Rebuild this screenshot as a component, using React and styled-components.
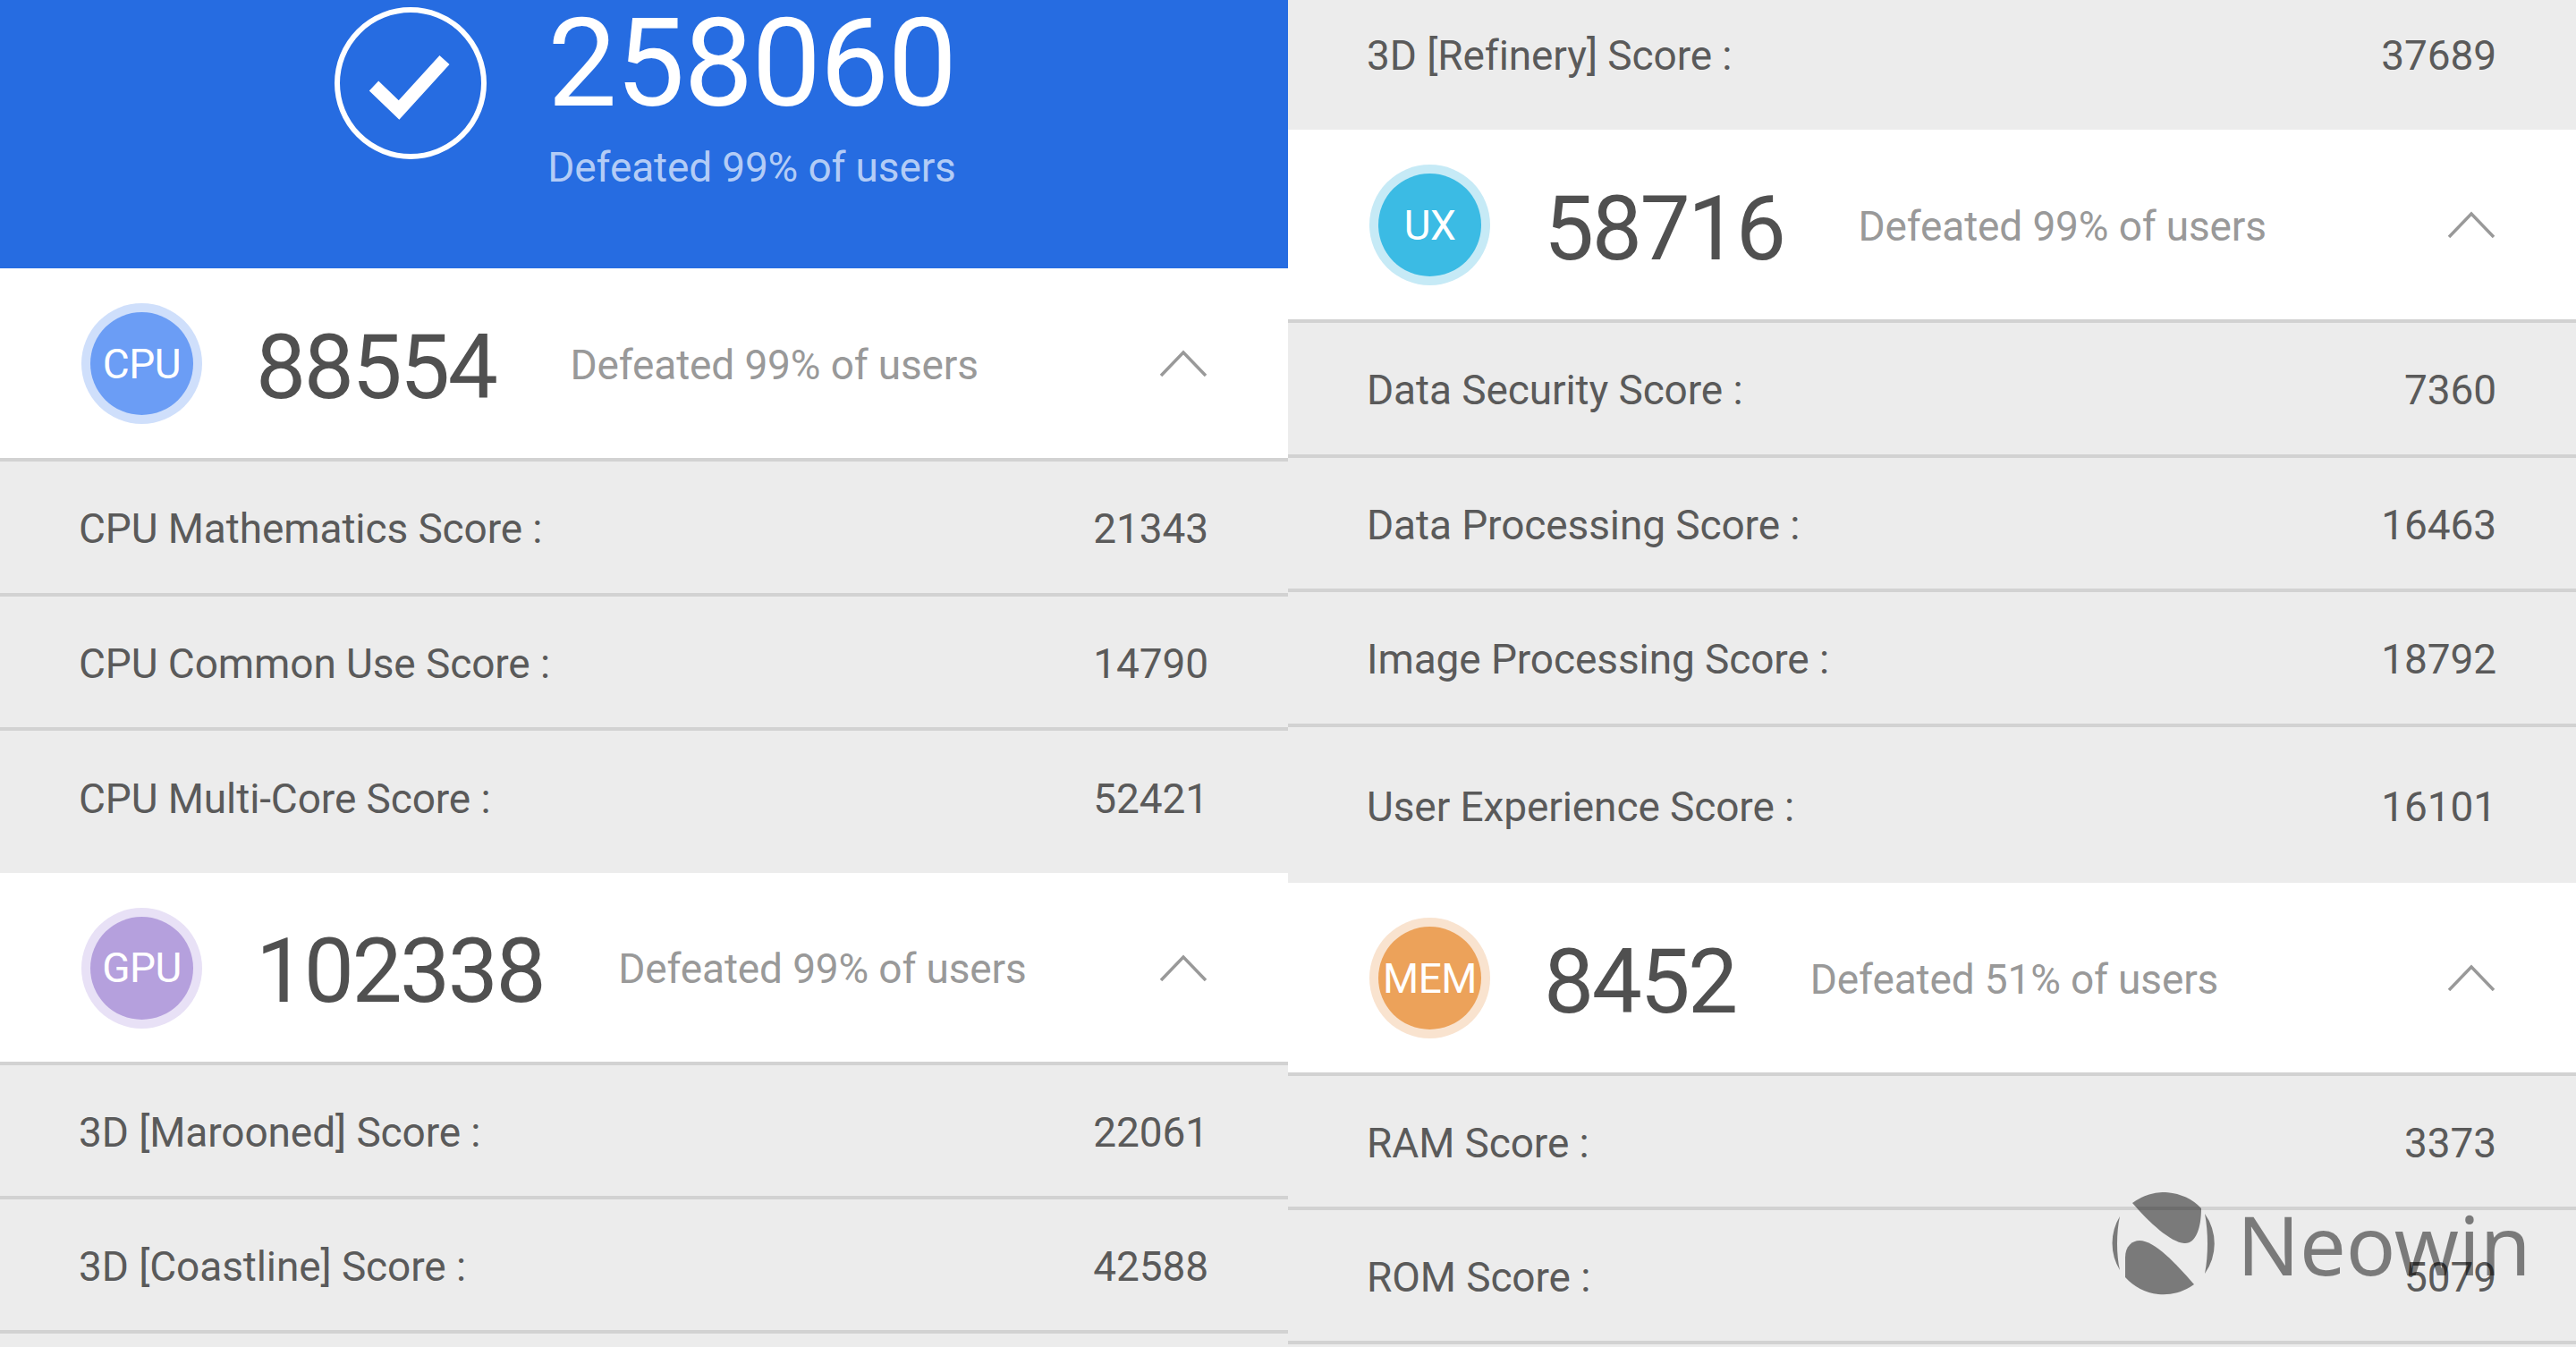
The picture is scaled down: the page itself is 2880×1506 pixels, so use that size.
import React from "react"
import styled, { createGlobalStyle } from "styled-components"

const GlobalStyle = createGlobalStyle`
  html, body {
    margin: 0;
    padding: 0;
    background: #ececec;
  }
`

const sections = {
  left: [
    { type: "hero" },
    {
      type: "head", label: "CPU", score: "88554", beat: "99", color: "#6b9df5", ring: "#cfdffb", height: 216,
      rows: [
        ["CPU Mathematics Score :", "21343", 151],
        ["CPU Common Use Score :", "14790", 150],
        ["CPU Multi-Core Score :", "52421", 159, 11, true],
      ],
    },
    {
      type: "head", label: "GPU", score: "102338", beat: "99", color: "#b5a0dd", ring: "#e8e1f6", height: 215,
      rows: [
        ["3D [Marooned] Score :", "22061", 150],
        ["3D [Coastline] Score :", "42588", 150],
        ["", "", 60],
      ],
    },
  ],
  right: [
    { type: "rows", rows: [["3D [Refinery] Score :", "37689", 145, 24, true]] },
    {
      type: "head", label: "UX", score: "58716", beat: "99", color: "#3bbbe4", ring: "#c6eaf6", height: 216,
      rows: [
        ["Data Security Score :", "7360", 151],
        ["Data Processing Score :", "16463", 150],
        ["Image Processing Score :", "18792", 151],
        ["User Experience Score :", "16101", 174, 0, true],
      ],
    },
    {
      type: "head", label: "MEM", score: "8452", beat: "51", color: "#eca25a", ring: "#f9e3cf", height: 216,
      rows: [
        ["RAM Score :", "3373", 150],
        ["ROM Score :", "5079", 150],
      ],
    },
  ],
}

function Hero() {
  return (
    <HeroBar>
      <CheckIcon viewBox="0 0 170 170">
        <circle cx="85" cy="85" r="82" fill="none" stroke="#fff" strokeWidth="6" />
        <polyline points="44,88 72,115 123,59" fill="none" stroke="#fff" strokeWidth="15" />
      </CheckIcon>
      <HeroText>
        <HeroScore>258060</HeroScore>
        <HeroBeat>Defeated 99% of users</HeroBeat>
      </HeroText>
    </HeroBar>
  )
}

function Section({ section }) {
  return (
    <>
      <Head $height={section.height}>
        <Badge $color={section.color} $ring={section.ring}>{section.label}</Badge>
        <Score>{section.score}</Score>
        <Beat>Defeated {section.beat}% of users</Beat>
        <Chevron viewBox="0 0 54 30">
          <polyline points="2,29 27,3 52,29" fill="none" stroke="#999" strokeWidth="3.5" />
        </Chevron>
      </Head>
      <Rows rows={section.rows} />
    </>
  )
}

function Rows({ rows }) {
  return rows.map(([name, value, height, lift, flat]) => (
    <Row key={name || "blank"} $height={height} $lift={lift} $flat={flat}>
      <span>{name}</span>
      <span>{value}</span>
    </Row>
  ))
}

function Column({ items }) {
  return (
    <Col>
      {items.map((item, i) => {
        if (item.type === "hero") return <Hero key={i} />
        if (item.type === "rows") return <Rows key={i} rows={item.rows} />
        return <Section key={i} section={item} />
      })}
    </Col>
  )
}

export default function App() {
  return (
    <Page>
      <GlobalStyle />
      <Column items={sections.left} />
      <Column items={sections.right} />
      <Watermark>
        <LogoMark viewBox="0 0 116 115">
          <path d="M23 12 A57.5 57.5 0 0 1 100 18 C100 40 94 58 81 57 C66 56 42 34 23 12 Z" />
          <path d="M15 95 L15 73 C15 60 23 54 31 54 C48 54 72 80 92 103 A57.5 57.5 0 0 1 15 95 Z" />
          <path d="M9 27 A57.5 57.5 0 0 0 9 87 C5 70 5 45 9 27 Z" />
          <path d="M104 24 A57.5 57.5 0 0 1 104 91 C108 70 108 45 104 24 Z" />
        </LogoMark>
        <LogoText>Neowin</LogoText>
      </Watermark>
    </Page>
  )
}

const Page = styled.div`
  position: relative;
  display: grid;
  grid-template-columns: 1440px 1440px;
  width: 2880px;
  height: 1506px;
  overflow: hidden;
  font-family: Roboto, "Liberation Sans", sans-serif;
  background: #ececec;
`

const Col = styled.div`
  display: flex;
  flex-direction: column;
  min-width: 0;
`

const HeroBar = styled.div`
  display: flex;
  flex: none;
  justify-content: center;
  gap: 68px;
  height: 300px;
  padding: 8px 0 0 3px;
  box-sizing: border-box;
  background: #266ce1;
`

const CheckIcon = styled.svg`
  flex: none;
  width: 170px;
  height: 170px;
`

const HeroText = styled.div`
  display: flex;
  flex-direction: column;
  align-items: center;
`

const HeroScore = styled.div`
  margin-top: -6px;
  font-size: 138px;
  line-height: 138px;
  letter-spacing: -1.5px;
  color: #fff;
`

const HeroBeat = styled.div`
  margin-top: 20px;
  font-size: 46px;
  line-height: 54px;
  letter-spacing: -0.15px;
  color: #b3ccf6;
`

const Head = styled.div`
  display: flex;
  flex: none;
  align-items: center;
  height: ${props => props.$height}px;
  padding: 0 90px 0 101px;
  box-sizing: border-box;
  background: #fff;
  border-bottom: 4px solid #d2d2d2;
`

const Badge = styled.div`
  display: flex;
  flex: none;
  align-items: center;
  justify-content: center;
  width: 115px;
  height: 115px;
  margin-top: 1px;
  border-radius: 50%;
  background: ${props => props.$color};
  box-shadow: 0 0 0 10px ${props => props.$ring};
  color: #fff;
  font-size: 46px;
  letter-spacing: -0.5px;
`

const Score = styled.div`
  margin: 9px 0 0 70px;
  font-size: 100px;
  line-height: 100px;
  letter-spacing: -2.5px;
  color: #505050;
`

const Beat = styled.div`
  margin: 3px 0 0 83px;
  font-size: 46px;
  letter-spacing: -0.15px;
  color: #999;
`

const Chevron = styled.svg`
  flex: none;
  width: 54px;
  height: 30px;
  margin-left: auto;
`

const Row = styled.div`
  display: flex;
  flex: none;
  align-items: center;
  justify-content: space-between;
  height: ${props => props.$height}px;
  padding: 3px 89px ${props => props.$lift || 0}px 88px;
  box-sizing: border-box;
  background: #ececec;
  border-bottom: ${props => (props.$flat ? "none" : "4px solid #d2d2d2")};
  color: #5a5a5a;
  font-size: 46px;
  letter-spacing: -0.1px;
`

const Watermark = styled.div`
  position: absolute;
  left: 2361px;
  top: 1333px;
  display: flex;
  align-items: center;
  gap: 24px;
  opacity: 0.48;
`

const LogoMark = styled.svg`
  flex: none;
  width: 116px;
  height: 115px;
  fill: #000;
`

const LogoText = styled.div`
  font-family: "Noto Sans", sans-serif;
  font-size: 92px;
  line-height: 115px;
  color: #000;
`
